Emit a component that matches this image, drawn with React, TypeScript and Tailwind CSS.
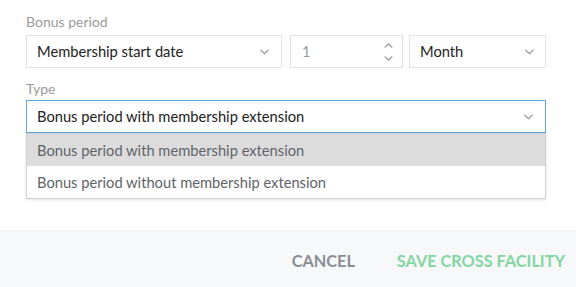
import React from 'react';

const Chevron: React.FC<{ up?: boolean; className?: string }> = ({ up, className }) => (
    <svg viewBox="0 0 10 6" className={className} fill="none" stroke="currentColor" strokeWidth="1.6" strokeLinecap="round" strokeLinejoin="round">
        {up ? <path d="M1 5l4-4 4 4" /> : <path d="M1 1l4 4 4-4" />}
    </svg>
);

const App: React.FC = () => {
    return (
        <div className="w-[576px] h-[287px] bg-white flex flex-col font-['Lato',sans-serif] overflow-hidden">
            {/* Form */}
            <div className="h-[230px] pl-[26px] pr-[30px] pt-[13px]">
                <div className="text-[14px] text-[#9b9b9b] leading-[18px]">Bonus period</div>
                <div className="mt-[4px] flex h-[33px]">
                    <div className="w-[256px] border border-[#e3e3e3] flex items-center justify-between pl-[10px] pr-[12px]">
                        <span className="text-[14.7px] text-[#222]">Membership start date</span>
                        <Chevron className="w-[9px] h-[6px] text-[#a3a3a3]" />
                    </div>
                    <div className="ml-[8px] w-[113px] border border-[#e3e3e3] flex items-center justify-between pl-[11px] pr-[9px]">
                        <span className="text-[14.7px] text-[#9b9b9b]">1</span>
                        <div className="flex flex-col gap-[8px] text-[#a3a3a3]">
                            <Chevron up className="w-[9px] h-[5px]" />
                            <Chevron className="w-[9px] h-[5px]" />
                        </div>
                    </div>
                    <div className="ml-[6px] w-[137px] border border-[#e3e3e3] flex items-center justify-between pl-[10px] pr-[11px]">
                        <span className="text-[14.7px] text-[#222]">Month</span>
                        <Chevron className="w-[9px] h-[6px] text-[#a3a3a3]" />
                    </div>
                </div>

                <div className="mt-[12px] text-[14px] text-[#9b9b9b] leading-[18px]">Type</div>
                <div className="relative mt-[2px]">
                    <div className="h-[33px] w-[520px] border border-[#5aa7e3] flex items-center justify-between pl-[10px] pr-[12px]">
                        <span className="text-[14.7px] text-[#222]">Bonus period with membership extension</span>
                        <Chevron className="w-[9px] h-[6px] text-[#a3a3a3]" />
                    </div>
                    {/* Open menu */}
                    <div className="absolute left-0 top-[33px] w-[520px] bg-white border border-[#d0d0d0] shadow-[0_1px_3px_rgba(0,0,0,0.12)]">
                        <div className="h-[32px] bg-[#dcdcdc] flex items-center pl-[10px] text-[14.7px] text-[#5f6469]">
                            Bonus period with membership extension
                        </div>
                        <div className="h-[32px] flex items-center pl-[10px] text-[14.7px] text-[#5f6469]">
                            Bonus period without membership extension
                        </div>
                    </div>
                </div>
            </div>

            {/* Footer */}
            <div className="flex-1 bg-[#f7f8fa] border-t border-[#eeeff1] flex items-center justify-end pr-[11px] pt-[4px] gap-[42px]">
                <button className="text-[16.3px] font-bold text-[#8b8e93]">CANCEL</button>
                <button className="text-[16.3px] font-bold text-[#84d6a0]">SAVE CROSS FACILITY</button>
            </div>
        </div>
    );
};

export default App;
